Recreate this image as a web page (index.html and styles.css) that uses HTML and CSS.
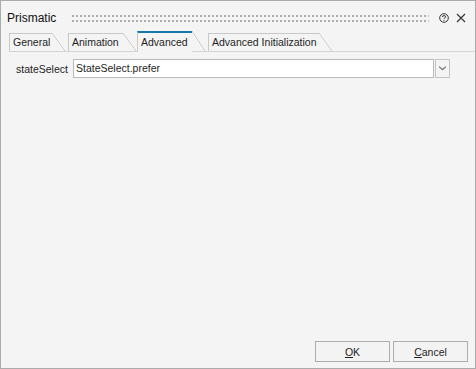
FILE: index.html
```html
<!DOCTYPE html>
<html>
<head>
    <meta http-equiv="Content-Type" content="text/html; charset=utf-8" />
    <title>Prismatic</title>
    <link rel="stylesheet" href="styles.css">
</head>
<body>
  <div class="window">
    <div class="title-bar">
      <span class="title">Prismatic</span>
      <svg class="grip" height="7">
        <defs>
          <pattern id="dots" width="4" height="5" patternUnits="userSpaceOnUse">
            <rect x="0" y="0" width="2" height="2" fill="#acacac"/>
          </pattern>
        </defs>
        <rect x="0" y="0" width="100%" height="7" fill="url(#dots)"/>
      </svg>
      <svg class="help-icon" width="10" height="10" viewBox="0 0 10 10">
        <circle cx="5" cy="5" r="4.3" fill="none" stroke="#333" stroke-width="1"/>
        <path d="M3.4 4 Q3.4 2.6 5 2.6 Q6.6 2.6 6.6 3.8 Q6.6 4.6 5.6 5 Q5 5.3 5 6" fill="none" stroke="#333" stroke-width="1"/>
        <rect x="4.5" y="6.8" width="1" height="1" fill="#333"/>
      </svg>
      <svg class="close-icon" width="10" height="10" viewBox="0 0 10 10">
        <path d="M1 1 L9 9 M9 1 L1 9" stroke="#333" stroke-width="1.1"/>
      </svg>
    </div>

    <div class="tabs">
      <div class="tab tab-general">General</div>
      <div class="tab tab-animation">Animation</div>
      <div class="tab tab-advanced active">Advanced</div>
      <div class="tab tab-init">Advanced Initialization</div>
    </div>

    <div class="content">
      <div class="field-row">
        <label class="field-label">stateSelect</label>
        <div class="combo">
          <div class="combo-text">StateSelect.prefer</div>
          <div class="combo-button">
            <svg width="7" height="5" viewBox="0 0 7 5">
              <path d="M0 0 L3.5 2.6 L7 0 L7 1.6 L3.5 4.4 L0 1.6 Z" fill="#808080"/>
            </svg>
          </div>
        </div>
      </div>
    </div>

    <div class="buttons">
      <button class="btn"><u>O</u>K</button>
      <button class="btn"><u>C</u>ancel</button>
    </div>
  </div>
</body>
</html>
```

FILE: styles.css
```css
body {
    margin: 0;
    font-family: "Liberation Sans", Arial, sans-serif;
    color: #1e1e1e;
}

.window {
    width: 476px;
    height: 369px;
    box-sizing: border-box;
    border: 1px solid #ababab;
    background-color: #f4f4f4;
    display: flex;
    flex-direction: column;
}

.title-bar {
    display: flex;
    align-items: center;
    height: 26px;
    padding: 4px 9px 0 6px;
}

.title {
    font-size: 12px;
    color: #111;
}

.grip {
    flex: 1;
    min-width: 0;
    margin: 0 10px 0 16px;
}

.help-icon {
    margin-right: 7px;
}

.tabs {
    display: flex;
    align-items: flex-end;
    height: 20px;
    margin-left: 8px;
    border-bottom: 1px solid #d4d4d4;
    font-size: 10.5px;
}

.tab {
    position: relative;
    height: 18px;
    box-sizing: border-box;
    border-left: 1px solid #c8c8c8;
    border-top: 1px solid #c8c8c8;
    padding-left: 3px;
    line-height: 17px;
    white-space: nowrap;
}

.tab::after {
    content: "";
    position: absolute;
    top: -1px;
    left: 100%;
    width: 13px;
    height: 18px;
    background: linear-gradient(to top right, transparent calc(50% - 0.7px), #c8c8c8 50%, transparent calc(50% + 0.7px));
}

.tab-general {
    width: 43px;
    margin-right: 16px;
}

.tab-animation {
    width: 55px;
    margin-right: 14px;
}

.tab-advanced {
    width: 55px;
    margin-right: 16px;
}

.tab-init {
    width: 111px;
}

.tab.active {
    height: 21px;
    margin-bottom: -1px;
    border-top: 2px solid #1478ac;
    background-color: #f4f4f4;
    line-height: 18px;
}

.tab.active::after {
    top: -2px;
    height: 20px;
}

.content {
    padding: 7px 25px 0 15px;
}

.field-row {
    display: flex;
    align-items: center;
    font-size: 10.5px;
}

.field-label {
    width: 57px;
}

.combo {
    flex: 1;
    display: flex;
    height: 19px;
}

.combo-text {
    flex: 1;
    box-sizing: border-box;
    border: 1px solid #bababa;
    background-color: #fff;
    padding-left: 2px;
    line-height: 17px;
}

.combo-button {
    width: 15px;
    box-sizing: border-box;
    margin-left: 1px;
    border: 1px solid #c4c4c4;
    display: flex;
    justify-content: center;
    align-items: center;
}

.buttons {
    margin-top: auto;
    display: flex;
    justify-content: flex-end;
    gap: 3px;
    padding: 0 7px 6px 0;
}

.btn {
    width: 75px;
    height: 21px;
    box-sizing: border-box;
    border: 1px solid #adadad;
    background-color: #f3f3f3;
    font-family: "Liberation Sans", Arial, sans-serif;
    font-size: 10.5px;
    color: #1e1e1e;
    padding: 0;
}
```
